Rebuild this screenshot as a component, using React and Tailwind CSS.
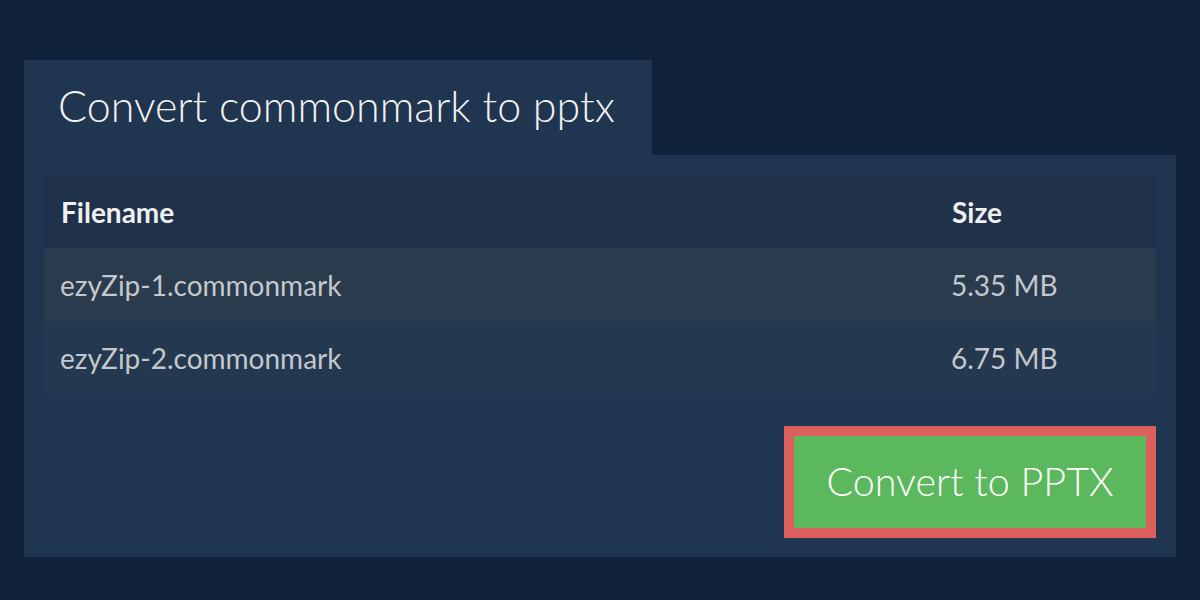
import React from 'react';

const files = [
  { name: 'ezyZip-1.commonmark', size: '5.35 MB', bg: 'bg-[#2a3b4d]' },
  { name: 'ezyZip-2.commonmark', size: '6.75 MB', bg: 'bg-[#24394f]' },
];

export default function App() {
  return (
    <div className="h-[600px] w-[1200px] bg-[#10233a] px-6 pt-[60px] font-['Lato','Liberation_Sans',sans-serif]">
      {/* Tab title */}
      <div className="flex h-[95px] w-[628px] items-center bg-[#20354f] pl-[34px] pb-[4px]">
        <h1 className="text-[43px] font-light leading-none text-[#f2f2f2]">Convert commonmark to pptx</h1>
      </div>

      {/* Panel */}
      <div className="flex h-[402px] flex-col bg-[#20354f] px-5 pt-[21px]">
        <div className="flex flex-col">
          <div className="grid h-[72px] grid-cols-[891px_1fr] items-center bg-[#1f3249] text-[28px] font-bold text-[#f0f0f0]">
            <div className="pl-[17px]">Filename</div>
            <div className="pl-[17px]">Size</div>
          </div>
          {files.map((f) => (
            <div
              key={f.name}
              className={`grid h-[73px] grid-cols-[891px_1fr] items-center text-[28px] text-[#c3c8ce] ${f.bg}`}
            >
              <div className="pl-[16px]">{f.name}</div>
              <div className="pl-[16px]">{f.size}</div>
            </div>
          ))}
        </div>

        <div className="mt-[32px] flex justify-end">
          <button className="flex h-[112px] w-[372px] items-center justify-center border-[10px] border-[#db5f5c] bg-[#5cb85c] pb-[2px] text-[39.5px] font-light text-white">
            Convert to PPTX
          </button>
        </div>
      </div>
    </div>
  );
}
